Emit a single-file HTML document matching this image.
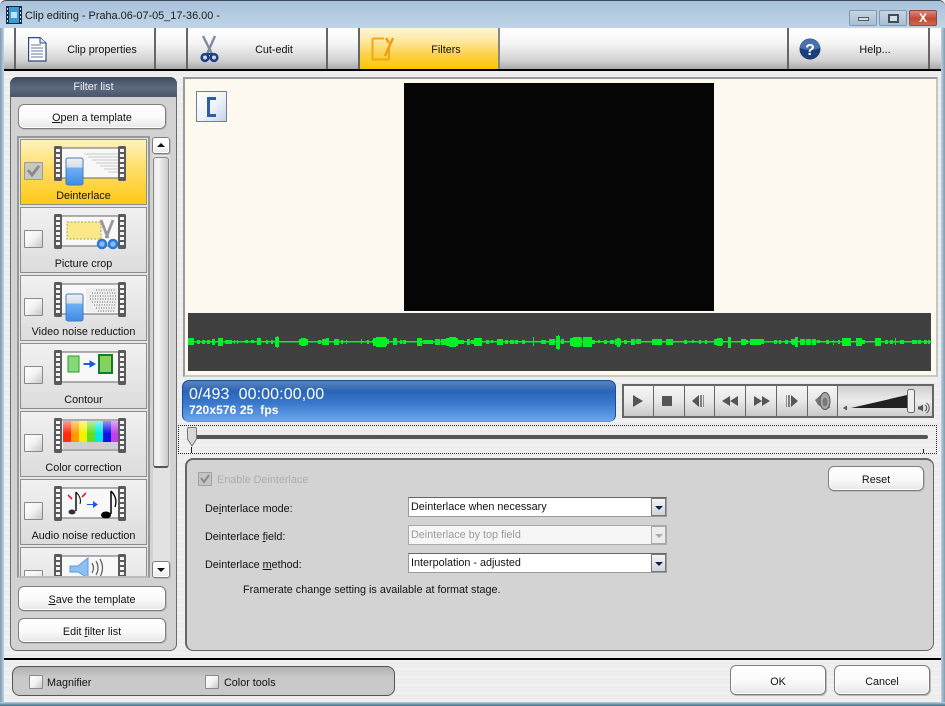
<!DOCTYPE html>
<html><head><meta charset="utf-8">
<style>
*{box-sizing:border-box}
html,body{margin:0;padding:0}
body{width:945px;height:706px;overflow:hidden;position:relative;font:10.8px "Liberation Sans",sans-serif;color:#111;
background:repeating-linear-gradient(180deg,#f0f0f0 0,#ececec 3px,#f3f3f3 5px,#e9e9e9 8px)}
.a{position:absolute}
.t{position:absolute;white-space:nowrap;line-height:14px}
.c{text-align:center}
u{text-decoration:underline}
.btn{position:absolute;border:1px solid #7d7d7d;border-radius:6px;background:linear-gradient(180deg,#fff 0,#fafafa 55%,#e6e6e6 100%);text-align:center;box-shadow:inset 0 0 0 1px #fff,1px 1px 0 #bbb;white-space:nowrap}
.tab{position:absolute;top:28px;height:41px;background:linear-gradient(180deg,#fff 0,#f6f6f6 35%,#d4d4d4 78%,#a9a9a9 100%);border-right:2px solid #666}
.cb{position:absolute;width:15px;height:15px;border:1px solid #8a8a8a;border-radius:1px;background:linear-gradient(135deg,#fff 0,#f2f2f2 50%,#c8c8c8 100%)}
.item{position:absolute;left:20px;width:127px;height:66px;border:1px solid #8e8e8e;background:linear-gradient(180deg,#f1f1f1,#dcdcdc)}
.item .t{left:0;width:125px;text-align:center;top:49px}
.item>svg{position:absolute;left:33px;top:6px}
.item .cb{left:3px;top:22px;width:19px;height:18px}
.combo{position:absolute;left:408px;width:259px;height:20px;background:#fff;border:1px solid #9a9a9a;border-top-color:#666;padding-left:2px;line-height:19px}
.combo i{position:absolute;right:0;top:0;width:15px;height:18px;background:linear-gradient(180deg,#f5f5f5,#cfd3da);border:1px solid #777}
.combo i:after{content:"";position:absolute;left:3px;top:7px;border:4px solid transparent;border-top:4px solid #10204e;border-bottom:0}
.combo.d{color:#9a9a9a;background:#f6f6f6;border-color:#aaa}
.combo.d i{border-color:#aaa;background:#ececec}
.combo.d i:after{border-top-color:#aaa}
.tb{position:absolute;top:386px;height:30px;border-right:1px solid #666;background:linear-gradient(180deg,#f5f5f5,#e8e8e8 50%,#c8c8c8)}
</style></head><body>

<!-- window frame -->
<div class="a" style="left:0;top:0;width:945px;height:28px;background:linear-gradient(180deg,#a8c2da,#b6cde2 60%,#c0d4e6);border-top:1px solid #3c4d5c;border-radius:6px 6px 0 0"></div>
<div class="a" style="left:0;top:28px;width:4px;height:674px;background:linear-gradient(90deg,#7f98ab,#bdd3e6)"></div>
<div class="a" style="left:941px;top:28px;width:4px;height:674px;background:linear-gradient(90deg,#bdd3e6,#7f98ab)"></div>
<div class="a" style="left:0;top:702px;width:945px;height:4px;background:linear-gradient(180deg,#bdd3e6,#3d6a80)"></div>

<svg class="a" style="left:6px;top:6px" width="16" height="18" viewBox="0 0 16 18"><rect width="16" height="18" fill="#1a2a44"/><rect x="3" y="1" width="10" height="16" fill="#3a9ad8"/><rect x="5" y="6" width="6" height="6" fill="#bfe4f8"/><g fill="#dfe9f2"><rect x="1" y="2" width="1" height="2"/><rect x="1" y="6" width="1" height="2"/><rect x="1" y="10" width="1" height="2"/><rect x="1" y="14" width="1" height="2"/><rect x="14" y="2" width="1" height="2"/><rect x="14" y="6" width="1" height="2"/><rect x="14" y="10" width="1" height="2"/><rect x="14" y="14" width="1" height="2"/></g></svg>
<div class="t" style="left:25px;top:9px;color:#1a1a1a;font-size:10.9px">Clip editing - Praha.06-07-05_17-36.00 -</div>

<!-- caption buttons -->
<div class="a" style="left:849px;top:10px;width:28px;height:16px;border:1px solid #8098ae;border-radius:2px;background:linear-gradient(180deg,#c6d6e4,#a8bdd0)"><div class="a" style="left:8px;top:6px;width:11px;height:4px;border:1px solid #4a5a68;background:#d5dde5"></div></div>
<div class="a" style="left:879px;top:10px;width:28px;height:16px;border:1px solid #8098ae;border-radius:2px;background:linear-gradient(180deg,#c6d6e4,#a8bdd0)"><div class="a" style="left:8px;top:3px;width:11px;height:9px;border:2px solid #3f4f5e;background:#d5dde5"></div></div>
<div class="a" style="left:909px;top:10px;width:28px;height:16px;border:1px solid #8a4a40;border-radius:2px;background:linear-gradient(180deg,#d88a78,#c04a34 55%,#cc6a50);color:#fff;font:bold 12px/14px 'Liberation Sans',sans-serif;text-align:center">X</div>

<!-- toolbar -->
<div class="tab" style="left:4px;width:12px"></div>
<div class="tab" style="left:16px;width:140px"></div>
<div class="tab" style="left:156px;width:32px"></div>
<div class="tab" style="left:188px;width:140px"></div>
<div class="tab" style="left:328px;width:32px"></div>
<div class="tab" style="left:360px;width:140px;background:linear-gradient(180deg,#fff6d8 0,#fde9a4 30%,#fdd14a 65%,#fcc800 100%);border-right-color:#888"></div>
<div class="tab" style="left:500px;width:289px"></div>
<div class="tab" style="left:789px;width:141px"></div>
<div class="tab" style="left:930px;width:11px;border-right:0"></div>
<div class="a" style="left:4px;top:69px;width:937px;height:2px;background:#000"></div>

<svg class="a" style="left:28px;top:37px" width="19" height="25" viewBox="0 0 19 25"><path d="M.6 .6H12L18 6V24H.6Z" fill="#fff" stroke="#2b4a80" stroke-width="1.200"/><path d="M12 .6V6H18" fill="#dfe6f2" stroke="#2b4a80"/><path d="M3 8H13M3 11H15M3 14H15M3 17H15M3 20H15" stroke="#6a7a96"/></svg>
<div class="t c" style="left:48px;width:108px;top:42px;margin-top:1px">Clip properties</div>

<svg class="a" style="left:200px;top:35px" width="19" height="28" viewBox="0 0 19 28"><path d="M3 1L12 19M15 1L7 19" stroke="#7f8ba3" stroke-width="2.400" fill="none"/><circle cx="5" cy="22.500" r="3.300" fill="none" stroke="#1d3f86" stroke-width="2.600"/><circle cx="14" cy="22.500" r="3.300" fill="none" stroke="#1d3f86" stroke-width="2.600"/><path d="M7 19L12 19" stroke="#1d3f86" stroke-width="2"/></svg>
<div class="t c" style="left:220px;width:108px;top:43px">Cut-edit</div>

<svg class="a" style="left:371px;top:36px" width="24" height="25" viewBox="0 0 24 25"><path d="M1.500 2.500H13M18 10V23.500H1.500V2.500" fill="none" stroke="#f0a814" stroke-width="2"/><path d="M15 2L18 7M22 2L14 20" stroke="#ee9c10" stroke-width="2.400" fill="none"/></svg>
<div class="t c" style="left:392px;width:108px;top:43px">Filters</div>

<svg class="a" style="left:799px;top:38px" width="22" height="22" viewBox="0 0 22 22"><circle cx="11" cy="11" r="10.500" fill="#1c3f7c"/><path d="M1 10A10 9 0 0 1 21 10Q11 14 1 10Z" fill="#4a70ac"/><text x="11" y="17" text-anchor="middle" font-family="Liberation Sans" font-weight="bold" font-size="16" fill="#fff">?</text></svg>
<div class="t c" style="left:822px;width:106px;top:43px">Help...</div>

<!-- left panel -->
<div class="a" style="left:10px;top:77px;width:167px;height:574px;background:#d2d2d2;border:1px solid #6a6a6a;border-radius:7px"></div>
<div class="a t c" style="left:10px;top:77px;width:167px;height:20px;background:linear-gradient(180deg,#3f4a5e,#5c6a80 55%,#495569);border-radius:7px 7px 0 0;color:#eef0f4;line-height:21px">Filter list</div>

<div class="btn" style="left:18px;top:104px;width:148px;height:25px;line-height:27px"><u>O</u>pen a template</div>

<div class="a" style="left:17px;top:136px;width:133px;height:442px;border:2px solid #979797;border-bottom:2px solid #bbb;background:#e4e4e4"></div>

<svg width="0" height="0" style="position:absolute"><defs>
<g id="film"><rect x="6" y="2" width="60" height="30" fill="#f8f8f8" stroke="#666" stroke-width="1"/>
<rect x="0" y="0" width="8" height="35" rx="1.500" fill="#5a5a5a"/><rect x="64" y="0" width="8" height="35" rx="1.500" fill="#5a5a5a"/>
<g fill="#f4f4f4"><rect x="2" y="3" width="4" height="3"/><rect x="2" y="8" width="4" height="3"/><rect x="2" y="13" width="4" height="3"/><rect x="2" y="18" width="4" height="3"/><rect x="2" y="23" width="4" height="3"/><rect x="2" y="28" width="4" height="3"/><rect x="66" y="3" width="4" height="3"/><rect x="66" y="8" width="4" height="3"/><rect x="66" y="13" width="4" height="3"/><rect x="66" y="18" width="4" height="3"/><rect x="66" y="23" width="4" height="3"/><rect x="66" y="28" width="4" height="3"/></g></g>
<linearGradient id="bl" x1="0" y1="0" x2="0" y2="1"><stop offset="0" stop-color="#eef2f6"/><stop offset=".35" stop-color="#d8dde4"/><stop offset=".36" stop-color="#6fb0f4"/><stop offset="1" stop-color="#3d8ce6"/></linearGradient>
<linearGradient id="fd" x1="0" y1="0" x2="0" y2="1"><stop offset="0" stop-color="#fff" stop-opacity=".55"/><stop offset=".6" stop-color="#fff" stop-opacity="0"/></linearGradient>
</defs></svg>

<div class="item" style="top:139px;background:linear-gradient(180deg,#fff2c0 0,#ffe070 40%,#fdc815 100%)">
<svg width="74" height="42" viewBox="0 0 74 42"><use href="#film"/><path d="M30 8H64M34 11H64M38 14H64M42 17H64M46 20H64M50 23H64M54 26H64" stroke="#c8c8c8"/><rect x="12" y="12" width="17" height="27" rx="2" fill="url(#bl)" stroke="#4a7ab8"/></svg>
<div class="cb" style="background:#c9c9c4;border-color:#9a9a9a"><svg width="17" height="16" viewBox="0 0 17 16" style="display:block"><path d="M3 7L7 12L14 3" fill="none" stroke="#8a8a8a" stroke-width="3"/></svg></div>
<div class="t">Deinterlace</div></div>

<div class="item" style="top:207px"><svg width="74" height="42" viewBox="0 0 74 42"><use href="#film"/><rect x="13" y="8" width="34" height="17" fill="#fbe88a" stroke="#a8a060" stroke-dasharray="2 1.500"/><path d="M47 6L54 24M59 6L52 24" stroke="#999" stroke-width="2.800"/><circle cx="48" cy="30" r="4" fill="#8ab8f0" stroke="#2a78d8" stroke-width="2.500"/><circle cx="59" cy="30" r="4" fill="#8ab8f0" stroke="#2a78d8" stroke-width="2.500"/></svg><div class="cb"></div><div class="t">Picture crop</div></div>

<div class="item" style="top:275px"><svg width="74" height="42" viewBox="0 0 74 42"><use href="#film"/><rect x="32" y="6" width="32" height="24" fill="#e8e8e8" opacity=".6"/><path d="M42 8h20M38 11h24M36 14h26M36 17h26M38 20h24M40 23h22M42 26h20M44 29h16" stroke="#666" stroke-dasharray="1 1.500"/><rect x="12" y="12" width="17" height="27" rx="2" fill="url(#bl)" stroke="#4a7ab8"/></svg><div class="cb"></div><div class="t">Video noise reduction</div></div>

<div class="item" style="top:343px"><svg width="74" height="42" viewBox="0 0 74 42"><use href="#film"/><rect x="14" y="6" width="11" height="16" fill="#88d878" stroke="#22a030"/><rect x="45" y="5" width="13" height="18" fill="#88d060" stroke="#108028" stroke-width="2"/><path d="M30 13.500H36V11L41 14L36 17V14.500H30Z" fill="#1a5ce0" stroke="#1a5ce0"/></svg><div class="cb"></div><div class="t">Contour</div></div>

<div class="item" style="top:411px"><svg width="74" height="42" viewBox="0 0 74 42"><use href="#film"/><rect x="9" y="3" width="8" height="21" fill="#ff2a10"/><rect x="17" y="3" width="8" height="21" fill="#ff9a00"/><rect x="25" y="3" width="8" height="21" fill="#f8f000"/><rect x="33" y="3" width="8" height="21" fill="#60e020"/><rect x="41" y="3" width="8" height="21" fill="#00e8e8"/><rect x="49" y="3" width="8" height="21" fill="#1010e8"/><rect x="57" y="3" width="7" height="21" fill="#c040e8"/><rect x="9" y="3" width="55" height="21" fill="url(#fd)"/><rect x="9" y="24" width="55" height="7" fill="#cfcfcf"/></svg><div class="cb"></div><div class="t">Color correction</div></div>

<div class="item" style="top:479px"><svg width="74" height="42" viewBox="0 0 74 42"><use href="#film"/><path d="M22 6V25" stroke="#111" stroke-width="1.500"/><path d="M22 6Q28 12 26 18" stroke="#111" fill="none"/><ellipse cx="18" cy="26" rx="3.500" ry="2.500" fill="#333"/><path d="M14 9L18 13M32 7L28 11" stroke="#e02030" stroke-width="1.600"/><path d="M33 18H39V15L44 18.500L39 22V19H33Z" fill="#1a5ce0"/><path d="M57 5V28" stroke="#000" stroke-width="1.500"/><path d="M57 5Q64 12 61 21" stroke="#000" fill="none" stroke-width="1.300"/><ellipse cx="52" cy="29" rx="5" ry="3.500" fill="#000"/></svg><div class="cb"></div><div class="t">Audio noise reduction</div></div>

<div class="a" style="left:19px;top:547px;width:129px;height:29px;overflow:hidden"><div class="item" style="left:1px;top:0;height:66px"><svg width="74" height="42" viewBox="0 0 74 42"><use href="#film"/><path d="M16 12H24L34 4V24L24 18H16Z" fill="#8cc0f0" stroke="#5a9ae0"/><path d="M38 9Q41 14 38 19M42 7Q46 14 42 21M46 5Q51 14 46 23" fill="none" stroke="#666" stroke-width="1.300"/></svg><div class="cb"></div></div></div>

<!-- scrollbar -->
<div class="a" style="left:153px;top:137px;width:17px;height:440px;background:#e2e2e2"></div>
<div class="btn" style="left:152px;top:137px;width:18px;height:17px;border-radius:3px"><div class="a" style="left:4px;top:5px;border:4px solid transparent;border-bottom:4px solid #111;border-top:0"></div></div>
<div class="a" style="left:153px;top:157px;width:16px;height:311px;border:1px solid #888;border-bottom:2px solid #555;border-radius:3px;background:linear-gradient(90deg,#e8e8e8,#f5f5f5 30%,#cacaca)"></div>
<div class="btn" style="left:152px;top:561px;width:18px;height:17px;border-radius:3px"><div class="a" style="left:4px;top:6px;border:4px solid transparent;border-top:4px solid #111;border-bottom:0"></div></div>

<div class="btn" style="left:18px;top:586px;width:148px;height:25px;line-height:27px"><u>S</u>ave the template</div>
<div class="btn" style="left:18px;top:618px;width:148px;height:25px;line-height:27px">Edit <u>f</u>ilter list</div>

<!-- preview -->
<div class="a" style="left:183px;top:77px;width:755px;height:300px;background:#fdf9ef;border:2px solid #9a9a9a;border-bottom-color:#c9c9c0;border-right-color:#c4c4c4"></div>
<div class="a" style="left:404px;top:83px;width:310px;height:228px;background:#050505"></div>
<div class="a" style="left:196px;top:91px;width:31px;height:31px;border:1px solid #6d7f9c;background:linear-gradient(135deg,#fff,#eef2f8 55%,#c6d2e4)"></div>
<div class="a" style="left:207px;top:97px;width:9px;height:20px;border:3px solid #2c5ea0;border-right:0"></div>

<div class="a" style="left:188px;top:313px;width:743px;height:58px;background:#404040"></div>
<svg class="a" style="left:188px;top:313px" width="743" height="58" viewBox="188 313 743 58" fill="#00f226" shape-rendering="crispEdges">
<rect x="188" y="341" width="743" height="1.500"/>
<path d="M188 338h6v7h-6zM197 340h3v4h-3zM202 340h3v4h-3zM207 340h3v4h-3zM212 339h3v6h-3zM218 338h5v8h-5zM225 340h7v4h-7zM234 340h1v4h-1zM237 340h1v4h-1zM245 340h3v3h-3zM251 340h3v3h-3zM257 338h4v7h-4zM266 340h2v4h-2zM271 340h2v4h-2zM275 337h4v10h-4zM277 336h1v12h-1zM299 339h9v6h-9zM301 338h5v8h-5zM318 340h3v4h-3zM322 339h4v6h-4zM326 338h3v7h-3zM334 339h5v6h-5zM341 340h2v4h-2zM346 340h1v4h-1zM361 339h1v5h-1zM367 340h2v4h-2zM372 340h2v3h-2zM373 338h14v8h-14zM376 337h10v10h-10zM387 339h2v5h-2zM393 338h4v7h-4zM400 340h2v4h-2zM403 340h3v4h-3zM417 338h5v8h-5zM423 340h10v4h-10zM435 339h5v6h-5zM441 339h5v6h-5zM446 338h12v8h-12zM449 337h7v10h-7zM458 340h6v4h-6zM467 339h3v6h-3zM471 340h8v4h-8zM474 338h8v8h-8zM486 340h3v4h-3zM491 340h2v3h-2zM497 339h6v6h-6zM505 340h3v4h-3zM510 340h4v4h-4zM515 340h3v4h-3zM522 340h3v4h-3zM533 337h1v9h-1zM541 340h5v4h-5zM549 339h6v6h-6zM556 336h4v13h-4zM558 335h1v15h-1zM561 339h3v5h-3zM570 338h12v8h-12zM573 337h8v10h-8zM583 337h9v10h-9zM592 340h3v4h-3zM598 340h2v3h-2zM604 340h3v4h-3zM610 340h4v4h-4zM615 339h6v6h-6zM617 338h3v9h-3zM624 340h3v4h-3zM631 339h4v6h-4zM636 339h5v5h-5zM652 339h10v6h-10zM666 339h7v6h-7zM684 340h3v4h-3zM692 340h2v3h-2zM699 340h2v4h-2zM705 340h2v4h-2zM714 339h9v6h-9zM717 338h5v8h-5zM728 337h3v11h-3zM741 339h5v6h-5zM746 340h2v4h-2zM750 339h9v6h-9zM756 339h5v6h-5zM761 339h3v5h-3zM774 340h3v4h-3zM779 340h2v4h-2zM785 340h3v4h-3zM791 339h3v5h-3zM792 339h6v6h-6zM795 337h3v10h-3zM800 339h5v6h-5zM806 339h5v6h-5zM812 339h4v6h-4zM817 340h3v3h-3zM826 340h3v4h-3zM833 340h1v5h-1zM838 340h2v4h-2zM842 338h7v8h-7zM847 338h4v8h-4zM856 338h6v8h-6zM862 340h3v4h-3zM875 338h6v8h-6zM885 340h3v4h-3zM890 340h3v4h-3zM895 338h1v7h-1zM900 340h4v4h-4zM912 340h5v4h-5zM918 340h3v4h-3zM924 340h3v4h-3zM928 340h2v4h-2z"/>
</svg>

<!-- info -->
<div class="a" style="left:182px;top:380px;width:434px;height:42px;border-radius:7px;border:1px solid #1b4a96;border-bottom-color:#5a9ae4;background:linear-gradient(180deg,#5a82bc 0,#4a78b8 10%,#2a64b8 25%,#3a78cc 55%,#6aa6ec 100%)"></div>
<div class="t" style="left:189px;top:387px;color:#fff;font-size:16px;line-height:15px;letter-spacing:.1px">0/493&nbsp; 00:00:00,00</div>
<div class="t" style="left:189px;top:403px;color:#fff;font:bold 12px/14px 'Liberation Sans',sans-serif;letter-spacing:.1px">720x576 25&nbsp; fps</div>

<!-- transport -->
<div class="a" style="left:622px;top:384px;width:312px;height:34px;background:#e4e4e4;border:2px solid #666"></div>
<div class="tb" style="left:624px;width:30px"></div><div class="tb" style="left:654px;width:31px"></div><div class="tb" style="left:685px;width:30px"></div><div class="tb" style="left:715px;width:31px"></div><div class="tb" style="left:746px;width:31px"></div><div class="tb" style="left:777px;width:31px"></div><div class="tb" style="left:808px;width:30px"></div>
<div class="tb" style="left:838px;width:94px;border-right:0;background:linear-gradient(180deg,#d0d0d0,#ececec 50%,#cfcfcf)"></div>
<svg class="a" style="left:622px;top:384px" width="312" height="34" viewBox="0 0 312 34" fill="#555">
<path d="M11 11L21 17L11 23Z"/><rect x="40" y="12" width="10" height="10"/>
<path d="M70 17L77 11V23Z"/><rect x="78" y="11" width="2" height="12" opacity=".7"/><rect x="81" y="11" width="1" height="12" opacity=".6"/>
<path d="M100 17L108 12V22ZM108 17L116 12V22Z"/>
<path d="M132 12L140 17L132 22ZM140 12L148 17L140 22Z"/>
<rect x="164" y="11" width="1" height="12" opacity=".6"/><rect x="166" y="11" width="2" height="12" opacity=".7"/><path d="M169 11L176 17L169 23Z"/>
<path d="M193 16L201 9L206 10L208 24L203 25L196 21Z" fill="#777"/><ellipse cx="203" cy="17" rx="5" ry="8.500" fill="#a8a8a8" stroke="#555"/><ellipse cx="203" cy="18" rx="2.500" ry="4.500" fill="#777"/>
<path d="M221 24L225 21.500V26.500Z"/><path d="M229 24L285 11V24Z" fill="#222"/>
<path d="M298 22.500H296V25.500H298L301 27.500V20.500Z"/><path d="M303 21A3.500 3.500 0 0 1 303 27M304.500 19A6 6 0 0 1 304.500 29" fill="none" stroke="#555"/>
<rect x="285.500" y="5.500" width="7" height="23" rx="2" fill="#eee" stroke="#666"/>
</svg>

<!-- slider -->
<div class="a" style="left:178px;top:425px;width:759px;height:29px;border:1px dotted #222"></div>
<div class="a" style="left:192px;top:435px;width:736px;height:4px;border-radius:2px;background:#555"></div>
<div class="a" style="left:191px;top:447px;width:1px;height:6px;background:#222"></div>
<div class="a" style="left:923px;top:449px;width:1px;height:4px;background:#222"></div>
<svg class="a" style="left:186px;top:427px" width="12" height="20" viewBox="0 0 12 20"><path d="M1.500 2Q1.500 .5 3 .5H9Q10.500 .5 10.500 2V12L6 19L1.500 12Z" fill="#d8d8d8" stroke="#777"/></svg>

<!-- settings panel -->
<div class="a" style="left:185px;top:458px;width:749px;height:193px;background:#d3d3d3;border:1px solid #666;border-top:2px solid #666;border-left:2px solid #666;border-radius:8px"></div>
<div class="btn" style="left:828px;top:466px;width:96px;height:25px;line-height:27px">Reset</div>

<div class="cb" style="left:198px;top:472px;width:14px;height:14px;background:#c4c4c4;border-color:#a0a0a0"><svg width="12" height="12" viewBox="0 0 12 12" style="display:block"><path d="M2 5L5 9L10 2" fill="none" stroke="#8a8a8a" stroke-width="2"/></svg></div>
<div class="t" style="left:217px;top:473px;color:#adadad">Enable Deinterlace</div>

<div class="t" style="left:205px;top:502px">De<u>i</u>nterlace mode:</div>
<div class="t" style="left:205px;top:530px">Deinterlace <u>f</u>ield:</div>
<div class="t" style="left:205px;top:558px">Deinterlace <u>m</u>ethod:</div>
<div class="combo" style="top:497px">Deinterlace when necessary<i></i></div>
<div class="combo d" style="top:525px">Deinterlace by top field<i></i></div>
<div class="combo" style="top:553px">Interpolation - adjusted<i></i></div>
<div class="t" style="left:243px;top:583px">Framerate change setting is available at format stage.</div>

<!-- bottom -->
<div class="a" style="left:4px;top:658px;width:937px;height:2px;background:#000"></div>
<div class="a" style="left:12px;top:666px;width:383px;height:30px;border:1px solid #555;border-radius:8px;background:linear-gradient(180deg,#b0b0b0,#c9c9c9 35%,#c9c9c9)"></div>
<div class="cb" style="left:29px;top:675px;width:14px;height:14px"></div>
<div class="t" style="left:47px;top:676px">Magnifier</div>
<div class="cb" style="left:205px;top:675px;width:14px;height:14px"></div>
<div class="t" style="left:224px;top:676px">Color tools</div>
<div class="btn" style="left:730px;top:665px;width:96px;height:30px;line-height:33px">OK</div>
<div class="btn" style="left:834px;top:665px;width:96px;height:30px;line-height:33px">Cancel</div>
</body></html>
